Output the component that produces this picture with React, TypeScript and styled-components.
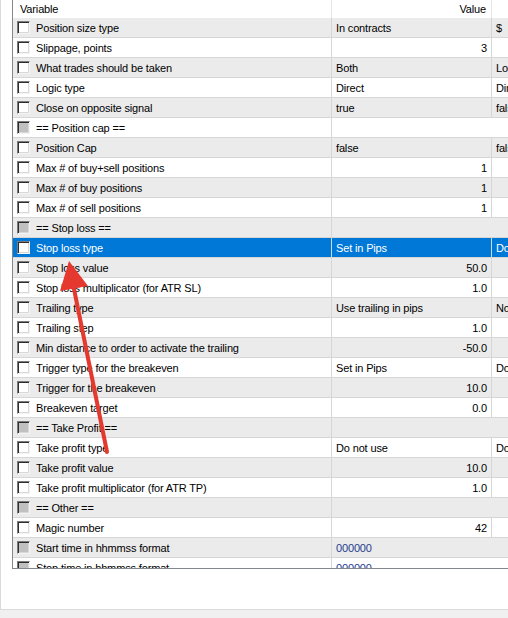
import React from "react";
import styled, { createGlobalStyle, css } from "styled-components";

const Global = createGlobalStyle`
  html, body { margin: 0; padding: 0; background: #ffffff; }
  body { font-family: "Liberation Sans", Arial, sans-serif; font-size: 11px; letter-spacing: -0.15px; color: #000; overflow: hidden; }
  * { box-sizing: border-box; }
`;

type Param = {
  name: string;
  value?: string;
  right?: boolean;
  extra?: string;
  group?: boolean;
  disabled?: boolean;
  selected?: boolean;
};

const params: Param[] = [
  { name: "Position size type", value: "In contracts", extra: "$" },
  { name: "Slippage, points", value: "3", right: true },
  { name: "What trades should be taken", value: "Both", extra: "Long" },
  { name: "Logic type", value: "Direct", extra: "Direct" },
  { name: "Close on opposite signal", value: "true", extra: "false" },
  { name: "== Position cap ==", group: true },
  { name: "Position Cap", value: "false", extra: "false" },
  { name: "Max # of buy+sell positions", value: "1", right: true },
  { name: "Max # of buy positions", value: "1", right: true },
  { name: "Max # of sell positions", value: "1", right: true },
  { name: "== Stop loss ==", group: true },
  { name: "Stop loss type", value: "Set in Pips", extra: "Do not use", selected: true },
  { name: "Stop loss value", value: "50.0", right: true },
  { name: "Stop loss multiplicator (for ATR SL)", value: "1.0", right: true },
  { name: "Trailing type", value: "Use trailing in pips", extra: "No trailing" },
  { name: "Trailing step", value: "1.0", right: true },
  { name: "Min distance to order to activate the trailing", value: "-50.0", right: true },
  { name: "Trigger type for the breakeven", value: "Set in Pips", extra: "Do not use" },
  { name: "Trigger for the breakeven", value: "10.0", right: true },
  { name: "Breakeven target", value: "0.0", right: true },
  { name: "== Take Profit ==", group: true },
  { name: "Take profit type", value: "Do not use", extra: "Do not use" },
  { name: "Take profit value", value: "10.0", right: true },
  { name: "Take profit multiplicator (for ATR TP)", value: "1.0", right: true },
  { name: "== Other ==", group: true },
  { name: "Magic number", value: "42", right: true },
  { name: "Start time in hhmmss format", value: "000000", disabled: true },
  { name: "Stop time in hhmmss format", value: "000000", disabled: true },
];

const Page = styled.div`
  position: relative;
  width: 508px;
  height: 618px;
  display: flex;
  flex-direction: column;
  background: #f0f0f0;
`;

const Frame = styled.div`
  height: 610px;
  background: #ffffff;
  border-left: 1px solid #dadada;
  border-bottom: 1px solid #dadada;
  padding-left: 11px;
`;

const List = styled.div`
  height: 569px;
  border-left: 1px solid #828790;
  border-bottom: 1px solid #828790;
  overflow: hidden;
  display: flex;
  flex-direction: column;
`;

const Header = styled.div`
  height: 18px;
  flex: none;
  display: grid;
  grid-template-columns: 319px 160px 1fr;
  background: #ffffff;
`;

const HeadCell = styled.div<{ $right?: boolean; $divider?: boolean }>`
  display: flex;
  align-items: center;
  padding: 0 5px 0 7px;
  justify-content: ${(p) => (p.$right ? "flex-end" : "flex-start")};
  border-right: ${(p) => (p.$divider ? "1px solid #e5e5e5" : "none")};
  white-space: nowrap;
`;

const Row = styled.div<{ $alt: boolean; $selected?: boolean }>`
  height: 20px;
  flex: none;
  display: grid;
  grid-template-columns: 319px 160px 1fr;
  border-bottom: 1px solid #d6d6d6;
  background: ${(p) => (p.$selected ? "#0078d7" : p.$alt ? "#ebebeb" : "#ffffff")};
  color: ${(p) => (p.$selected ? "#ffffff" : "#000000")};
`;

const NameCell = styled.div`
  display: flex;
  align-items: center;
  padding-left: 4px;
  gap: 6px;
  border-right: 1px solid #d6d6d6;
  white-space: nowrap;
  overflow: hidden;
`;

const Check = styled.span<{ $filled?: boolean }>`
  width: 13px;
  height: 13px;
  flex: none;
  margin-top: -1px;
  border: 1px solid;
  border-color: #7a7a7a #f4f4f4 #f4f4f4 #7a7a7a;
  box-shadow: inset 1px 1px 0 #2e2e2e, inset -1px -1px 0 #d8d8d8;
  background: ${(p) => (p.$filled ? "#c0c0c0" : "#ffffff")};
`;

const ValueCell = styled.div<{ $right?: boolean; $divider: boolean; $dim?: boolean }>`
  display: flex;
  align-items: center;
  justify-content: ${(p) => (p.$right ? "flex-end" : "flex-start")};
  padding: 0 4px 0 4px;
  white-space: nowrap;
  overflow: hidden;
  ${(p) =>
    p.$divider
      ? css`border-right: 1px solid #d6d6d6;`
      : css`grid-column: span 2;`}
  ${(p) => p.$dim && css`color: #1e3c8c;`}
`;

const ExtraCell = styled.div`
  display: flex;
  align-items: center;
  padding-left: 4px;
  white-space: nowrap;
  overflow: hidden;
`;

const Arrow = styled.svg`
  position: absolute;
  left: 0;
  top: 0;
  pointer-events: none;
`;

export default function App() {
  return (
    <>
      <Global />
      <Page>
        <Frame>
          <List>
            <Header>
              <HeadCell $divider>Variable</HeadCell>
              <HeadCell $right $divider>Value</HeadCell>
              <HeadCell />
            </Header>
            {params.map((p, i) => {
              const hasDivider = !p.group && !p.disabled;
              return (
                <Row key={p.name} $alt={i % 2 === 0} $selected={p.selected}>
                  <NameCell>
                    <Check $filled={p.group || p.disabled} />
                    <span>{p.name}</span>
                  </NameCell>
                  <ValueCell $right={p.right} $divider={hasDivider} $dim={p.disabled}>
                    {p.value ?? ""}
                  </ValueCell>
                  {hasDivider && <ExtraCell>{p.extra ?? ""}</ExtraCell>}
                </Row>
              );
            })}
          </List>
        </Frame>
        <Arrow width="508" height="618" viewBox="0 0 508 618">
          <line x1="107" y1="452" x2="73" y2="284" stroke="#e5392f" strokeWidth="4" strokeLinecap="round" />
          <polygon points="69,261 88,286 60,291" fill="#e5392f" />
        </Arrow>
      </Page>
    </>
  );
}
